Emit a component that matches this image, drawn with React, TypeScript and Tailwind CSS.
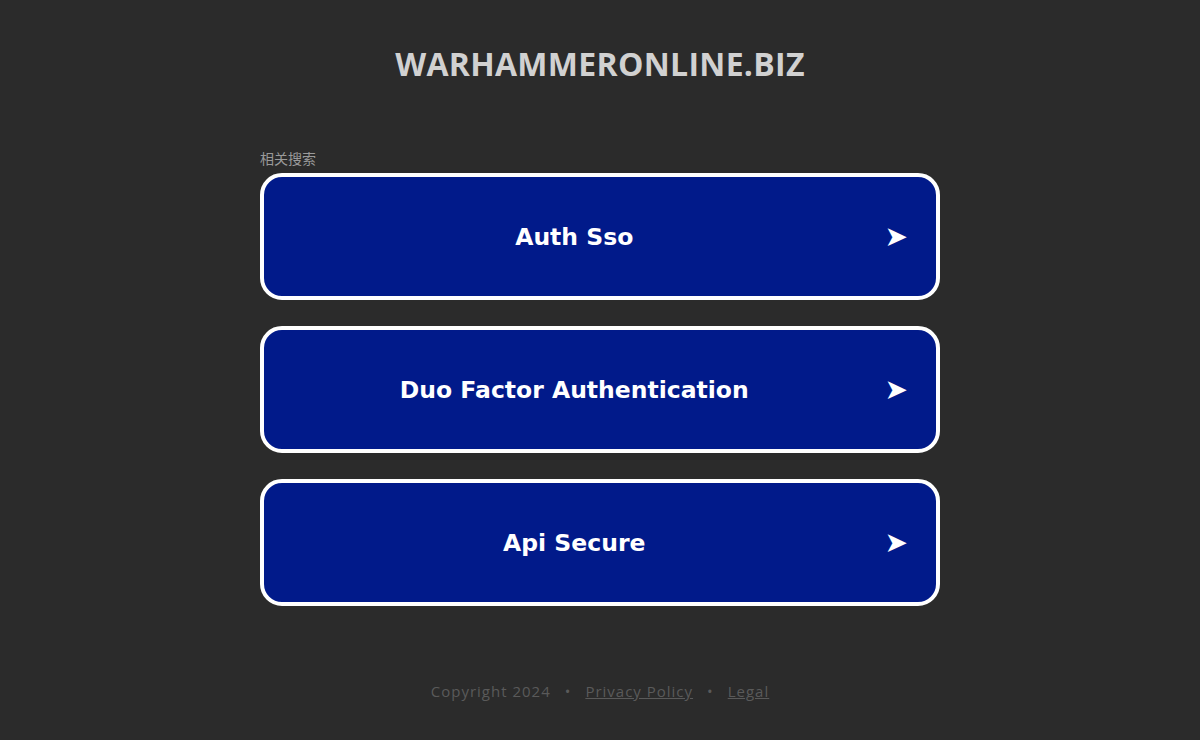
export default function App() {
  const links = ['Auth Sso', 'Duo Factor Authentication', 'Api Secure'];
  return (
    <div className="min-h-screen w-full bg-[#2b2b2b] flex flex-col items-center">
      <h1 className="mt-[44px] text-[32px] leading-[40px] font-bold text-[#d1d1d1] tracking-[0.3px] [font-family:'Open_Sans',sans-serif]">
        WARHAMMERONLINE.BIZ
      </h1>
      <div className="mt-[66px] w-[680px] flex flex-col">
        <div className="text-[14px] leading-[16px] text-[#9a9a9a] [font-family:'Noto_Sans_CJK_SC',sans-serif] mb-[7px]">
          相关搜索
        </div>
        <div className="flex flex-col gap-[26px]">
          {links.map((l) => (
            <a
              key={l}
              href="#"
              className="h-[127px] rounded-[22px] border-4 border-white bg-[#011a8a] flex items-center pr-[28px] text-white"
            >
              <span className="flex-1 pt-[3px] text-center text-[23.5px] font-bold [font-family:'DejaVu_Sans',Verdana,sans-serif]">
                {l}
              </span>
              <span className="text-[28px] leading-none [font-family:'DejaVu_Sans',sans-serif]">➤</span>
            </a>
          ))}
        </div>
      </div>
      <div className="mt-[74px] flex items-center gap-[14px] text-[15px] text-[#5a5a5a] tracking-[1px] [font-family:'Open_Sans',sans-serif]">
        <span>Copyright 2024</span>
        <span>•</span>
        <a href="#" className="underline">Privacy Policy</a>
        <span>•</span>
        <a href="#" className="underline">Legal</a>
      </div>
    </div>
  );
}
